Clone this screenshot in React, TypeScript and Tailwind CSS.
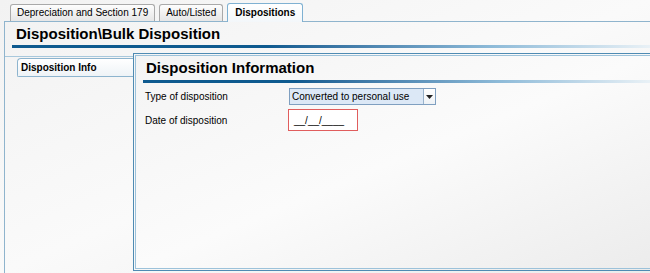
import React from 'react';

// Tax asset dialog: Dispositions tab
const tabs = [
  { label: 'Depreciation and Section 179', active: false },
  { label: 'Auto/Listed', active: false },
  { label: 'Dispositions', active: true },
];

const Tab: React.FC<{ label: string; active: boolean }> = ({ label, active }) => {
  if (active) {
    return (
      <div className="relative z-10 -mb-px flex h-[19px] items-center rounded-t-[3px] border border-b-0 border-[#7fb1d2] bg-gradient-to-b from-[#ffffff] to-[#f3f7fa] px-[7px] pb-[1px] font-bold">
        {label}
      </div>
    );
  }
  return (
    <div className="flex h-[17px] items-center rounded-t-[3px] border border-b-0 border-[#a9a9a9] bg-gradient-to-b from-[#fdfdfd] to-[#e6e6e6] px-[6px] pb-[1px]">
      {label}
    </div>
  );
};

export default function App() {
  return (
    <div className="flex h-[273px] w-[650px] flex-col overflow-hidden bg-gradient-to-br from-[#f2f2f2] via-[#fafafa] to-[#ececec] font-['Liberation_Sans',Arial,sans-serif] text-[10px] text-black">
      <div className="flex h-[21px] items-end gap-[4px] pl-[10px]">
        {tabs.map(t => (
          <Tab key={t.label} label={t.label} active={t.active} />
        ))}
      </div>

      <div className="ml-[4px] flex flex-1 flex-col border-l border-t border-[#8fb4cd]">
        <div className="pl-[11px] pt-[3px] text-[15px] font-bold leading-[18px]">Disposition\Bulk Disposition</div>
        <div className="ml-[7px] mt-[2px] h-[3px] bg-linear-to-r from-[#0e5a8f] from-40% via-[#8dbad8] via-75% to-[#e9f1f6]" />

        <div className="mt-[5px] flex flex-1">
          <div className="w-[128px] pt-[3px]">
            <div className="border-t border-[#a8c8dc] pl-[12px] pt-[1px]">
              <div className="flex h-[19px] items-center rounded-tl-[4px] rounded-bl-[2px] border border-r-0 border-[#8db4ce] bg-gradient-to-b from-[#ffffff] to-[#eef3f7] pl-[3px] font-bold">
                Disposition Info
              </div>
            </div>
          </div>

          <div className="mb-[2px] flex flex-1 border border-r-0 border-[#4f8bb3] py-px pl-px">
            <div className="flex flex-1 flex-col border border-r-0 border-[#9cc2da] bg-gradient-to-br from-[#f4f4f4] via-[#fbfbfb] to-[#ececec]">
              <div className="pl-[10px] pt-[3px] text-[15px] font-bold leading-[18px]">Disposition Information</div>
              <div className="ml-[7px] mt-[3px] h-[3px] bg-linear-to-r from-[#0e5a8f] from-30% via-[#8dbad8] via-70% to-[#e9f1f6]" />

              <div className="mt-[5px] flex items-center pl-[9px]">
                <div className="w-[144px]">Type of disposition</div>
                <div className="flex h-[17px] w-[147px] border border-[#7f9fc0] bg-[#dce8f6]">
                  <div className="flex flex-1 items-center pl-[2px]">Converted to personal use</div>
                  <div className="flex w-[12px] items-center justify-center border-l border-[#9ab3cc] bg-gradient-to-b from-white to-[#eef2f6]">
                    <svg width="7" height="4" viewBox="0 0 7 4">
                      <path d="M0 0h7L3.5 4z" fill="#222" />
                    </svg>
                  </div>
                </div>
              </div>

              <div className="mt-[4px] flex items-center pl-[9px]">
                <div className="w-[143px]">Date of disposition</div>
                <div className="flex h-[22px] w-[70px] items-center border-[1.5px] border-[#e05d5d] bg-white pl-[5px] pt-[1px]">
                  __/__/____
                </div>
              </div>
            </div>
          </div>
        </div>
      </div>
    </div>
  );
}
